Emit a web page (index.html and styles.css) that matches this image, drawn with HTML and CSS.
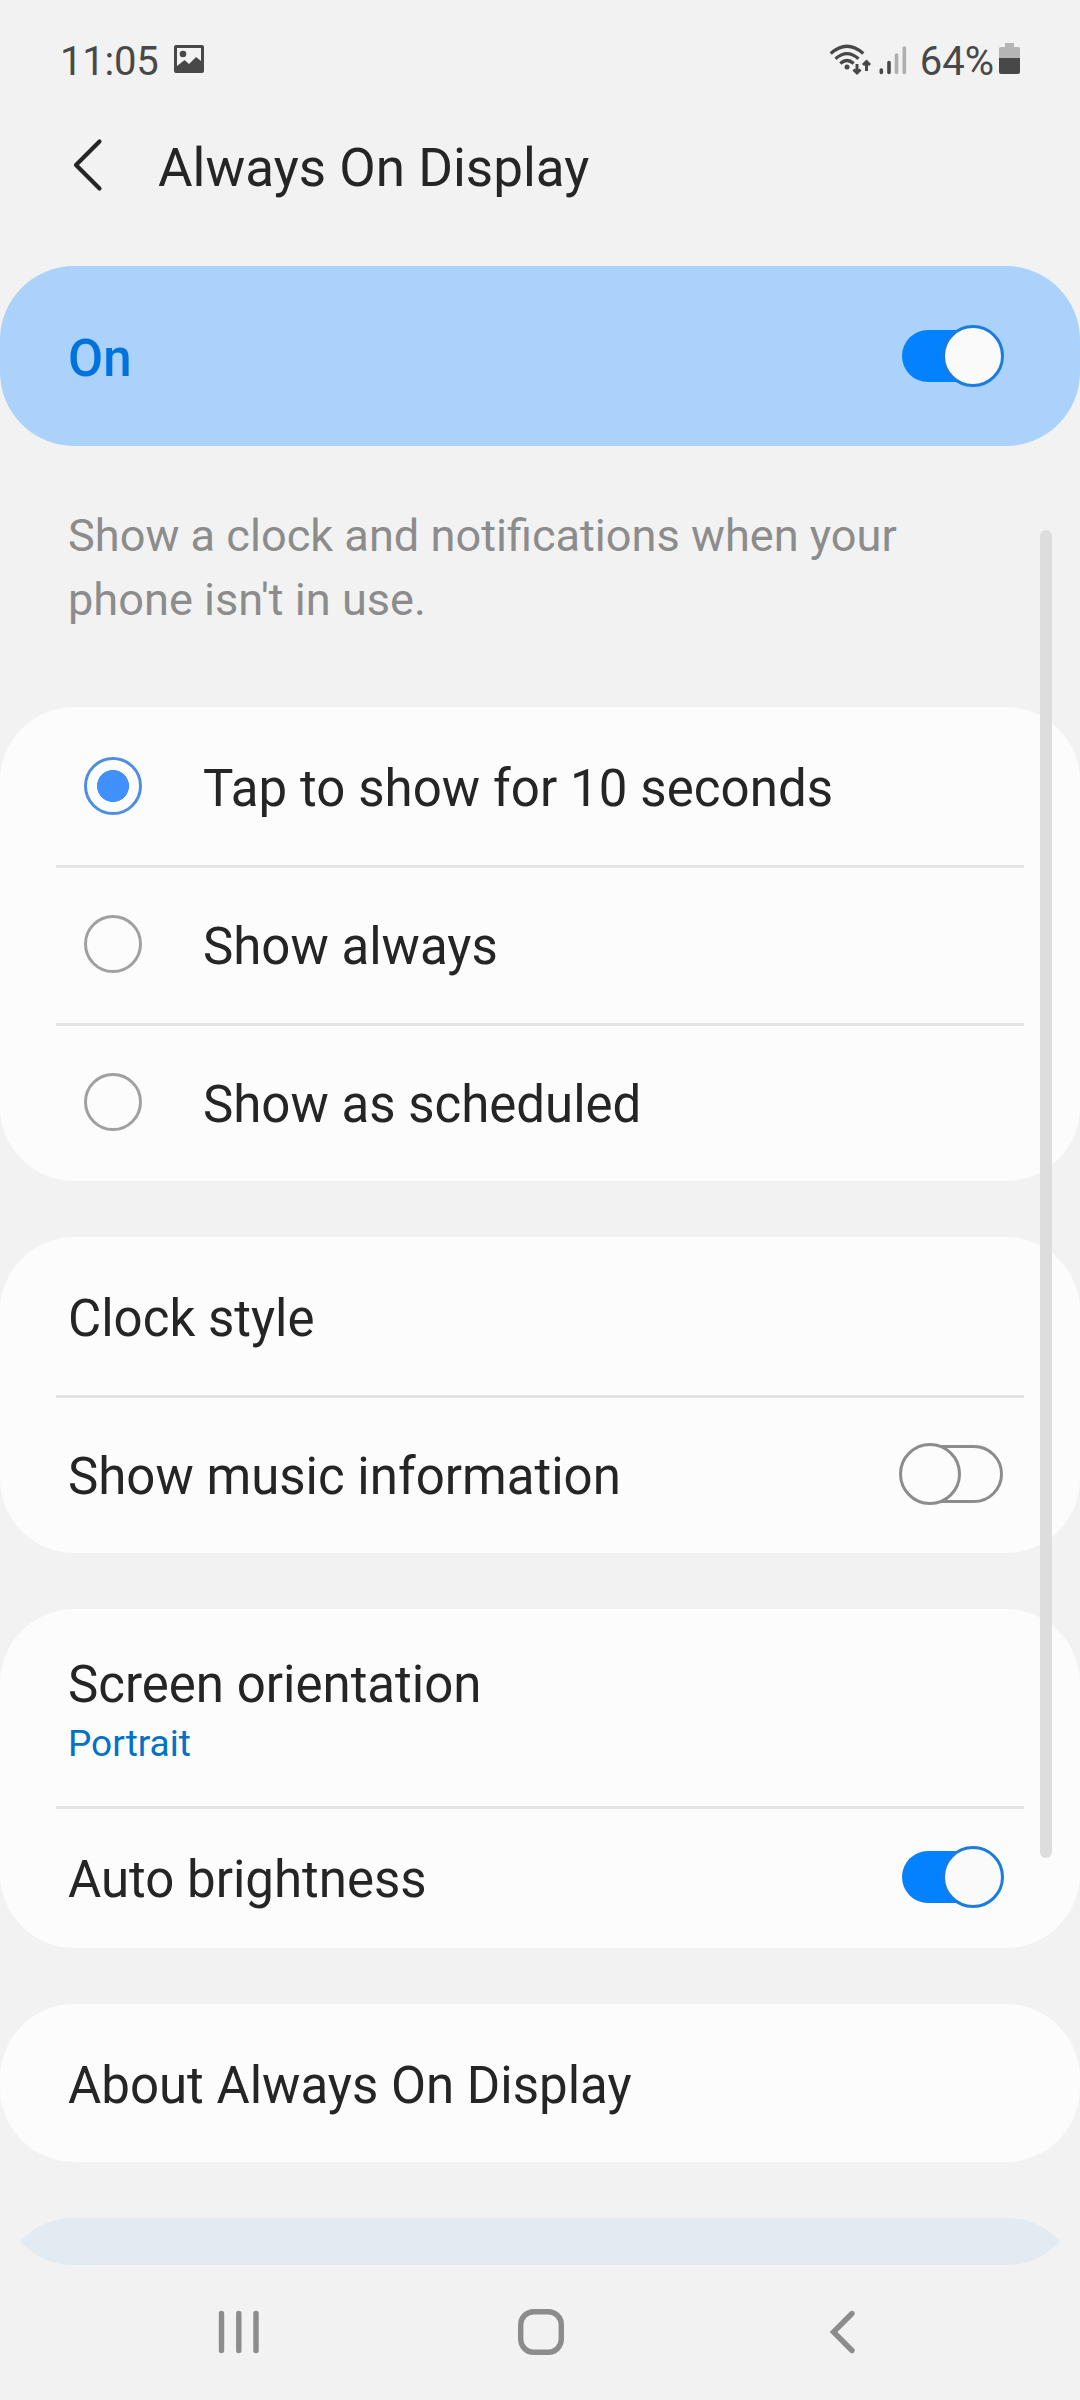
FILE: index.html
```html
<!DOCTYPE html>
<html lang="en">
<head>
<meta charset="utf-8">
<title>Always On Display</title>
<link rel="stylesheet" href="styles.css">
</head>
<body>
<div class="screen">
  <header class="status">
    <span class="time">11:05</span>
    <svg class="photo" viewBox="0 0 30 28" width="30" height="28"><path fill="#484848" fill-rule="evenodd" d="M2 0H28Q30 0 30 2V26Q30 28 28 28H2Q0 28 0 26V2Q0 0 2 0ZM3 3V21L10.500 15L15 19L22 12L27 16V3Z"/><circle cx="9" cy="9" r="3.300" fill="#484848"/></svg>
    <svg class="signals" viewBox="0 0 80 34" width="80" height="34">
      <g fill="none" stroke="#484848" stroke-width="3.200">
        <path d="M1.700 10.500Q18 -4 34.300 10.500"/><path d="M6.500 15.700Q18 5.500 29.500 15.700"/><path d="M11.300 20.500Q18 14.500 24.700 20.500"/>
        <path stroke-width="3" d="M28 21V30M24.500 26.500L28 30L31.500 26.500M37.500 28V19M34 22L37.500 18.500L41 22"/>
      </g>
      <circle cx="18" cy="24" r="2.500" fill="#484848"/>
      <g stroke-width="3.600" stroke-linecap="round"><path stroke="#484848" d="M52.300 27V29.500M60 19.500V29.500"/><path stroke="#afafaf" d="M67.500 12V29.500M75.300 5V29.500"/></g>
    </svg>
    <span class="percent">64%</span>
    <svg class="battery" viewBox="0 0 21 31" width="21" height="31"><path fill="#b5b5b5" d="M6 0H15V4H19Q21 4 21 6V15H0V6Q0 4 2 4H6Z"/><path fill="#484848" d="M0 15H21V29Q21 31 19 31H2Q0 31 0 29Z"/></svg>
  </header>
  <div class="titlebar">
    <svg class="back" viewBox="0 0 30 54" width="30" height="54"><path d="M26.500 3.500L3 27L26.500 50.500" fill="none" stroke="#252525" stroke-width="4.200" stroke-linecap="round" stroke-linejoin="round"/></svg>
    <h1 class="title">Always On Display</h1>
  </div>
  <main class="content">
    <section class="card master"><span class="label">On</span><span class="switch on"><i class="thumb"></i></span></section>
    <p class="hint">Show a clock and notifications when your<br>phone isn't in use.</p>
    <section class="card">
      <div class="row option"><span class="radio checked"></span><span class="label">Tap to show for 10 seconds</span></div>
      <div class="row option"><span class="radio"></span><span class="label">Show always</span></div>
      <div class="row option"><span class="radio"></span><span class="label">Show as scheduled</span></div>
    </section>
    <section class="card">
      <div class="row"><span class="label">Clock style</span></div>
      <div class="row"><span class="label">Show music information</span><span class="switch off"><i class="thumb"></i></span></div>
    </section>
    <section class="card">
      <div class="row double"><span class="label">Screen orientation</span><span class="value">Portrait</span></div>
      <div class="row short"><span class="label">Auto brightness</span><span class="switch on"><i class="thumb"></i></span></div>
    </section>
    <section class="card">
      <div class="row"><span class="label">About Always On Display</span></div>
    </section>
    <section class="peek"><svg viewBox="0 0 1080 47" width="1080" height="47"><path fill="#e2eaf2" d="M74 0H1006Q1038 0 1060 23.500Q1038 47 1006 47H74Q42 47 20 23.500Q42 0 74 0Z"/></svg></section>
    <div class="scrollbar"></div>
  </main>
  <nav class="nav">
    <svg viewBox="0 0 46 46" width="46" height="46"><path d="M5.500 4.500V41.500M22.800 4.500V41.500M40 4.500V41.500"/></svg>
    <svg viewBox="0 0 46 46" width="46" height="46"><rect x="2.700" y="2.700" width="40.600" height="40.600" rx="13"/></svg>
    <svg viewBox="0 0 46 46" width="46" height="46"><path d="M32 4.500L13.500 23L32 41.500"/></svg>
  </nav>
</div>
</body>
</html>
```
FILE: styles.css
```css
*, *::before { box-sizing: border-box; }
body { margin: 0; background: #f2f2f2; font-family: Roboto, "Liberation Sans", sans-serif; color: #252525; }
svg { display: block; flex: none; }
.screen { width: 1080px; height: 2400px; overflow: hidden; display: flex; flex-direction: column; }
.status { height: 110px; flex: none; display: flex; align-items: flex-start; padding: 0 60px 0 60px; color: #484848; font-size: 40px; line-height: 48px; }
.time, .percent { margin-top: 38px; }
.time { letter-spacing: -0.2px; }
.photo { margin: 45px 0 0 15px; }
.signals { margin: 43px 0 0 auto; }
.percent { margin-left: 11px; }
.battery { margin: 43px 0 0 5px; }
.titlebar { height: 156px; flex: none; display: flex; align-items: flex-start; padding: 0 73px; }
.back { margin-top: 28px; }
.title { margin: 26px 0 0 55px; font-size: 53px; line-height: 64px; font-weight: 400; }
.content { position: relative; display: flex; flex-direction: column; gap: 56px; height: 1999px; flex: none; overflow: hidden; }
.card { flex: none; border-radius: 74px; background: #fcfcfc; }
.master { height: 180px; background: #abd2fb; display: flex; align-items: center; justify-content: space-between; padding: 0 76px 0 68px; color: #0072de; }
.label { font-size: 51px; line-height: 60px; padding-top: 5px; white-space: nowrap; }
.master .label { font-weight: 500; }
.hint { margin: 0; height: 149px; padding: 2px 0 0 68px; font-size: 45.15px; line-height: 64px; color: #8c8c8c; white-space: nowrap; }
.row { position: relative; height: 158px; display: flex; align-items: center; justify-content: space-between; padding: 0 76px 0 68px; }
.row + .row::before { content: ""; position: absolute; left: 56px; right: 56px; top: 0; height: 3px; background: #e4e4e4; }
.option { justify-content: flex-start; padding-left: 84px; gap: 61px; }
.radio { width: 58px; height: 58px; border-radius: 50%; border: 3px solid #a0a0a0; }
.checked { border-color: #4d8ee0; background: radial-gradient(circle, #4091ff 15.700px, transparent 16.300px); }
.checked + .label { letter-spacing: 0.08px; }
.double { height: 197px; flex-direction: column; align-items: flex-start; justify-content: flex-start; padding-top: 41px; }
.value { font-size: 37px; line-height: 44px; margin-top: 7px; color: #0072c8; }
.short { height: 142px; }
.switch { position: relative; flex: none; width: 102px; height: 62px; }
.switch::before { content: ""; position: absolute; left: 0; top: 5px; width: 90px; height: 52px; border-radius: 26px; background: #0381fe; }
.thumb { position: absolute; right: 0; top: 0; width: 62px; height: 62px; border: 3px solid #1a7ce0; border-radius: 50%; background: #fafafa; }
.off { width: 105px; }
.off::before { left: auto; right: 1px; top: 2px; width: 92px; height: 58px; border-radius: 29px; border: 3px solid #8c8c8c; background: none; }
.off .thumb { right: auto; left: 0; border-color: #8c8c8c; background: #fcfcfc; }
.peek { flex: none; height: 47px; }
.scrollbar { position: absolute; left: 1040px; top: 264px; width: 12px; height: 1328px; border-radius: 6px; background: #ddd; }
.nav { flex: 1; display: flex; align-items: center; justify-content: space-between; padding: 0 214px 1px 216px; }
.nav svg { fill: none; stroke: #8c8c8c; stroke-width: 5.400px; stroke-linecap: round; }
```
